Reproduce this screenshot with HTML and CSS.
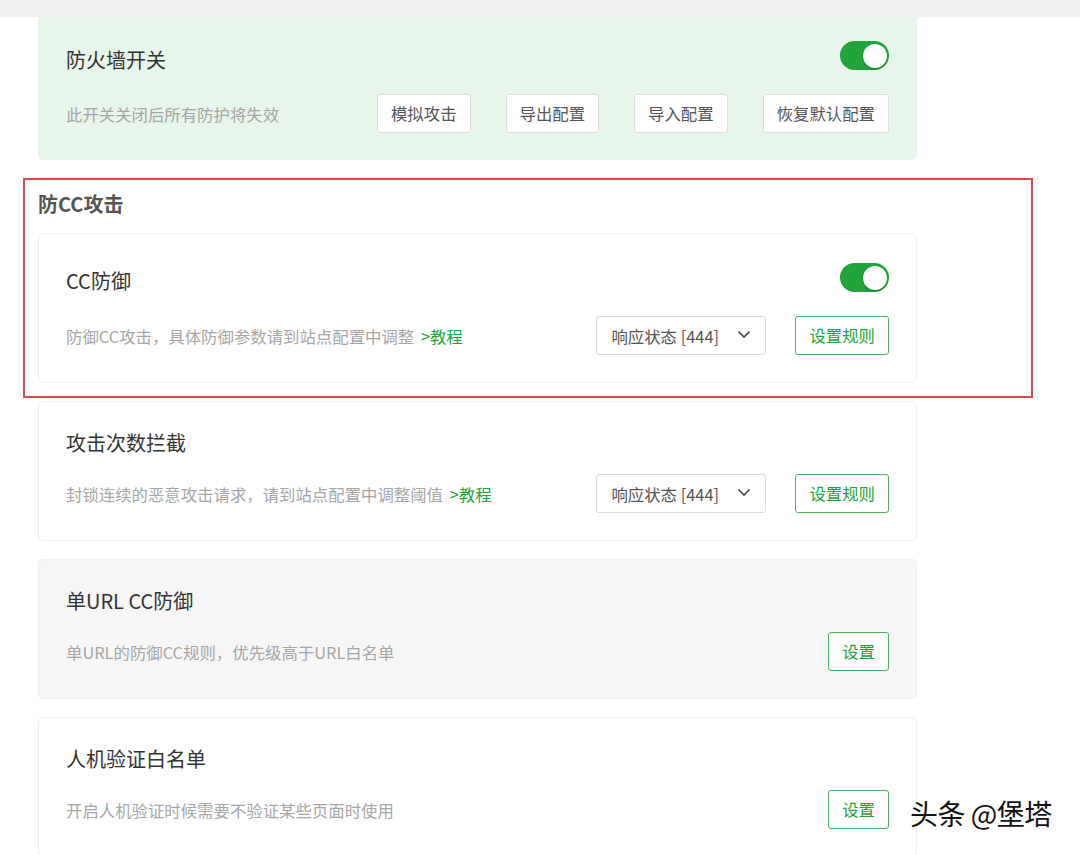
FILE: index.html
```html
<!DOCTYPE html>
<html lang="zh-CN">
<head>
<meta charset="utf-8">
<title>防火墙</title>
<link rel="stylesheet" href="styles.css">
</head>
<body>
<div class="topbar"></div>
<main class="page">
  <section class="card card-green">
    <div class="row-title">
      <span class="title">防火墙开关</span>
      <span class="toggle"><span class="knob"></span></span>
    </div>
    <div class="row-bottom">
      <span class="desc">此开关关闭后所有防护将失效</span>
      <div class="actions actions-wide">
        <button class="btn">模拟攻击</button>
        <button class="btn">导出配置</button>
        <button class="btn">导入配置</button>
        <button class="btn">恢复默认配置</button>
      </div>
    </div>
  </section>

  <div class="highlight">
    <h2 class="section-title">防CC攻击</h2>
    <section class="card card-toggle">
      <div class="row-title">
        <span class="title">CC防御</span>
        <span class="toggle"><span class="knob"></span></span>
      </div>
      <div class="row-bottom">
        <span class="desc">防御CC攻击，具体防御参数请到站点配置中调整 <a class="link">&gt;教程</a></span>
        <div class="actions">
          <div class="select"><span>响应状态 [444]</span><svg class="chev" width="14" height="9" viewBox="0 0 14 9"><polyline points="1.5,1.5 7,7 12.5,1.5" fill="none" stroke="#444" stroke-width="1.6"/></svg></div>
          <button class="btn btn-green">设置规则</button>
        </div>
      </div>
    </section>
  </div>

  <section class="card">
    <div class="row-title">
      <span class="title">攻击次数拦截</span>
    </div>
    <div class="row-bottom">
      <span class="desc">封锁连续的恶意攻击请求，请到站点配置中调整阈值 <a class="link">&gt;教程</a></span>
      <div class="actions">
        <div class="select"><span>响应状态 [444]</span><svg class="chev" width="14" height="9" viewBox="0 0 14 9"><polyline points="1.5,1.5 7,7 12.5,1.5" fill="none" stroke="#444" stroke-width="1.6"/></svg></div>
        <button class="btn btn-green">设置规则</button>
      </div>
    </div>
  </section>

  <section class="card card-gray">
    <div class="row-title">
      <span class="title">单URL CC防御</span>
    </div>
    <div class="row-bottom">
      <span class="desc">单URL的防御CC规则，优先级高于URL白名单</span>
      <div class="actions">
        <button class="btn btn-green">设置</button>
      </div>
    </div>
  </section>

  <section class="card">
    <div class="row-title">
      <span class="title">人机验证白名单</span>
    </div>
    <div class="row-bottom">
      <span class="desc">开启人机验证时候需要不验证某些页面时使用</span>
      <div class="actions">
        <button class="btn btn-green">设置</button>
      </div>
    </div>
  </section>
</main>
<div class="watermark">头条 @堡塔</div>
</body>
</html>
```

FILE: styles.css
```css
html, body {
  margin: 0;
  padding: 0;
  background: #fff;
  font-family: "Noto Sans CJK SC", "Noto Sans", sans-serif;
  color: #333;
  overflow: hidden;
  height: 855px;
}

.topbar {
  height: 17px;
  background: #f0f0f0;
}

.page {
  width: 879px;
  margin-left: 38px;
  display: flex;
  flex-direction: column;
  gap: 18px;
}

.card {
  box-sizing: border-box;
  border: 1px solid #efefef;
  border-radius: 5px;
  background: #fff;
  padding: 29px 27px 27px;
  display: flex;
  flex-direction: column;
  gap: 19px;
}

.card-green {
  background: #e7f5eb;
  border: none;
  border-radius: 0 0 5px 5px;
  padding: 24px 28px 27px;
  gap: 24px;
}

.card-gray {
  background: #f6f6f6;
}

.card-toggle {
  gap: 24px;
}

.row-title {
  display: flex;
  justify-content: space-between;
  align-items: center;
  min-height: 24px;
}

.title {
  font-size: 20px;
  line-height: 24px;
  color: #333;
}

.card-toggle .title,
.card-green .title {
  position: relative;
  top: 3px;
}

.card-green .title {
  top: 4px;
}

.row-bottom {
  display: flex;
  align-items: center;
  justify-content: space-between;
}

.desc {
  font-size: 16.4px;
  line-height: 22px;
  color: #a6a6a6;
}

.link {
  color: #20a53a;
  text-decoration: none;
  margin-left: 3px;
}

.actions {
  display: flex;
  align-items: center;
  gap: 29px;
}

.actions-wide {
  gap: 35px;
}

.btn {
  box-sizing: border-box;
  height: 39px;
  padding: 0 13px;
  border: 1px solid #dcdcdc;
  border-radius: 3px;
  background: #fff;
  font-family: inherit;
  font-size: 16.4px;
  color: #555;
  line-height: 37px;
}

.btn-green {
  border-color: #4caf62;
  color: #20a53a;
}

.select {
  box-sizing: border-box;
  width: 170px;
  height: 39px;
  border: 1px solid #dcdcdc;
  border-radius: 3px;
  background: #fff;
  display: flex;
  align-items: center;
  justify-content: space-between;
  padding: 0 14px 0 14px;
  font-size: 16.4px;
  color: #555;
}

.chev {
  margin-top: -3px;
}

.toggle {
  box-sizing: border-box;
  width: 49px;
  height: 29px;
  border-radius: 15px;
  background: #20a53a;
  display: flex;
  align-items: center;
  justify-content: flex-end;
  padding-right: 2px;
}

.knob {
  width: 24px;
  height: 24px;
  border-radius: 50%;
  background: #fff;
  box-shadow: 0 1px 2px rgba(0, 0, 0, 0.3);
}

.highlight {
  position: relative;
  display: flex;
  flex-direction: column;
}

.highlight::before {
  content: "";
  position: absolute;
  left: -15px;
  top: 0;
  width: 1010px;
  height: 220px;
  box-sizing: border-box;
  border: 2px solid #e5464a;
  pointer-events: none;
}

.section-title {
  margin: 12px 0 15px;
  font-size: 20px;
  line-height: 28px;
  font-weight: bold;
  color: #555;
}

.watermark {
  position: absolute;
  left: 910px;
  top: 796px;
  font-size: 28px;
  line-height: 34px;
  letter-spacing: -0.5px;
  color: #111;
  font-family: "Noto Sans CJK SC", sans-serif;
  text-shadow: -1px -1px 0 #fff, 1px -1px 0 #fff, -1px 1px 0 #fff, 1px 1px 0 #fff, 0 0 3px #fff;
}
```
